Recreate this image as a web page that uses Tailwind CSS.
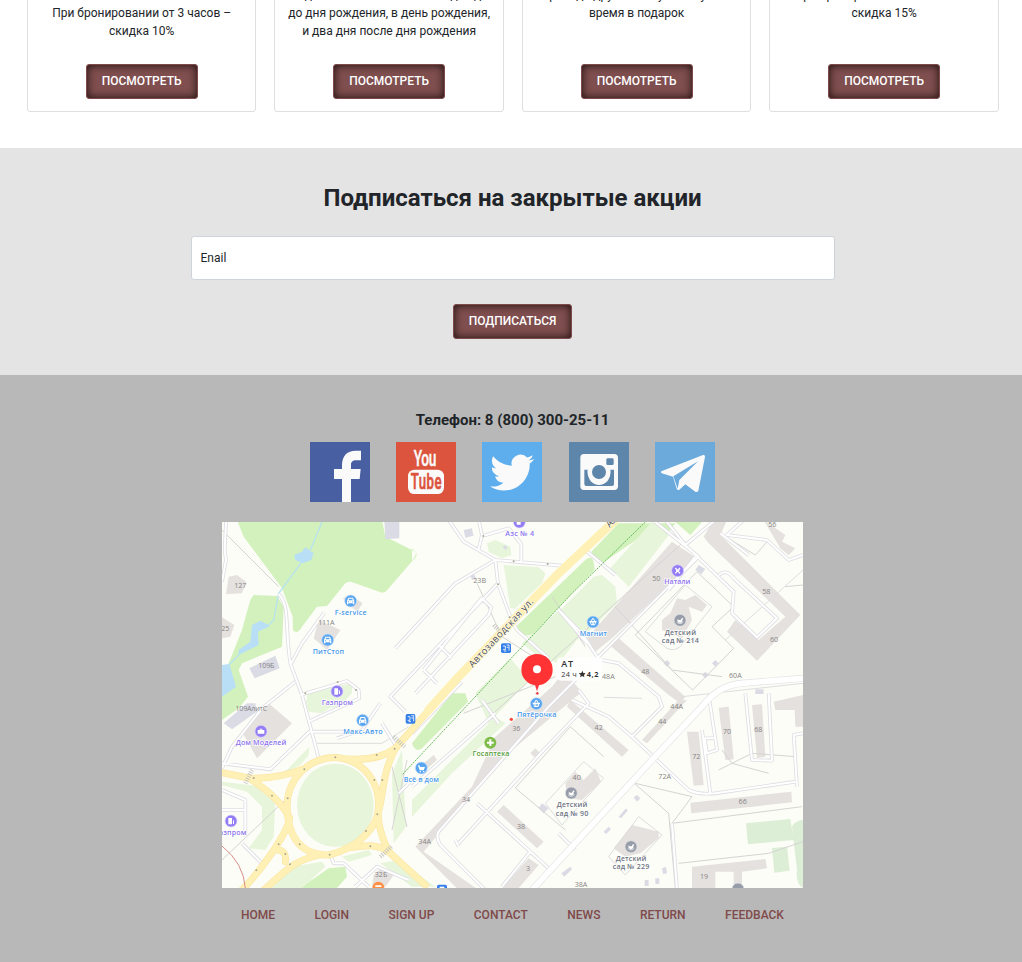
<!DOCTYPE html>
<html lang="ru">
<head>
<meta charset="utf-8">
<title>Акции</title>
<script src="https://cdn.jsdelivr.net/npm/@tailwindcss/browser@4"></script>
</head>
<body class="h-[962px] overflow-hidden bg-white font-[Roboto,sans-serif] text-xs leading-[18px] text-[#212529]">
<!-- Offer cards -->
<section class="h-[148px] overflow-hidden pl-[26.9px] pr-[23.1px]">
  <div class="-mt-[15px] grid h-[127px] grid-cols-4 gap-[18px] text-center">
    <article class="flex flex-col items-center justify-between rounded-[3px] border border-[#dfdfdf] pb-3">
      <p class="pt-[18px]">При бронировании от 3 часов –<br>скидка 10%</p>
      <button class="h-[35px] w-28 rounded-[3px] border border-[#7f4a4a] bg-[#7f4e4e] pb-0.5 font-medium text-white shadow-[inset_0_0_9px_#1a0c0c]">ПОСМОТРЕТЬ</button>
    </article>
    <article class="flex flex-col items-center justify-between rounded-[3px] border border-[#dfdfdf] pb-3">
      <p class="whitespace-nowrap">Скидка 10% именинникам за два дня<br>до дня рождения, в день рождения,<br>и два дня после дня рождения</p>
      <button class="h-[35px] w-28 rounded-[3px] border border-[#7f4a4a] bg-[#7f4e4e] pb-0.5 font-medium text-white shadow-[inset_0_0_9px_#1a0c0c]">ПОСМОТРЕТЬ</button>
    </article>
    <article class="flex flex-col items-center justify-between rounded-[3px] border border-[#dfdfdf] pb-3">
      <p>Приведи друга и получи бонусное<br>время в подарок</p>
      <button class="h-[35px] w-28 rounded-[3px] border border-[#7f4a4a] bg-[#7f4e4e] pb-0.5 font-medium text-white shadow-[inset_0_0_9px_#1a0c0c]">ПОСМОТРЕТЬ</button>
    </article>
    <article class="flex flex-col items-center justify-between rounded-[3px] border border-[#dfdfdf] pb-3">
      <p>При бронировании от 5 часов –<br>скидка 15%</p>
      <button class="h-[35px] w-28 rounded-[3px] border border-[#7f4a4a] bg-[#7f4e4e] pb-0.5 font-medium text-white shadow-[inset_0_0_9px_#1a0c0c]">ПОСМОТРЕТЬ</button>
    </article>
  </div>
</section>

<!-- Subscription -->
<section class="flex h-[227px] flex-col items-center bg-[#e4e4e4] pl-[3px] pt-[34px]">
  <h2 class="h-[54px] text-2xl leading-8 font-bold">Подписаться на закрытые акции</h2>
  <div class="flex h-11 w-[644px] items-center rounded-[3px] border border-[#ced4da] bg-white px-[9px]">Enail</div>
  <button class="mt-6 h-[35px] w-[119px] rounded-[3px] border border-[#7f4a4a] bg-[#7f4e4e] pb-0.5 font-medium text-white shadow-[inset_0_0_9px_#1a0c0c]">ПОДПИСАТЬСЯ</button>
</section>

<footer class="flex h-[587px] flex-col items-center bg-[#b8b8b8] pl-[3px] pt-[34px]">
  <p class="text-[15px] leading-[22px] font-bold">Телефон: 8 (800) 300-25-11</p>
  <div class="mt-[11px] -ml-[0.2px] flex w-[405px] justify-between">
    <svg class="size-[60px]" viewBox="0 0 180 180"><path fill="#485fa2" d="M0 0h180v180H0z"/><path fill="#fafafa" d="M96 180v-69H72V81h24V70c0-30 17-44 40-44h17v29h-14c-12 0-16 5-16 15v11h29l-3 30h-26v69z"/></svg>
    <svg class="size-[60px]" viewBox="0 0 180 180"><path fill="#dc543d" d="M0 0h180v180H0z"/><g font-family="Roboto" font-weight="500" fill="#fafafa"><text transform="translate(53 73) scale(.62 1)" font-size="66" textLength="110" stroke="#fafafa" stroke-width="1.5">You</text><rect x="36" y="83" width="108" height="73" rx="19"/><text fill="#dc543d" stroke="#dc543d" stroke-width="2" transform="translate(44 142) scale(.6 1)" font-size="66" textLength="154">Tube</text></g></svg>
    <svg class="size-[60px]" viewBox="0 0 24 24"><path fill="#5eaeed" d="M0 0h24v24H0z"/><path fill="#fafafa" transform="translate(3.25 3.4) scale(.735)" d="M23.95 4.57a10 10 0 0 1-2.82.78 4.96 4.96 0 0 0 2.16-2.72c-.95.55-2 .95-3.13 1.18a4.92 4.92 0 0 0-8.38 4.48C7.69 8.1 4.07 6.13 1.64 3.16a4.82 4.82 0 0 0-.67 2.48c0 1.71.87 3.21 2.19 4.1a4.9 4.9 0 0 1-2.23-.62v.06a4.92 4.92 0 0 0 3.95 4.83 5 5 0 0 1-2.21.08 4.94 4.94 0 0 0 4.6 3.42A9.87 9.87 0 0 1 0 19.54a13.99 13.99 0 0 0 7.55 2.21c9.05 0 14-7.5 14-13.98 0-.21 0-.42-.02-.63a9.94 9.94 0 0 0 2.46-2.55z"/></svg>
    <svg class="size-[60px]" viewBox="0 0 180 180"><path fill="#5e86aa" d="M0 0h180v180H0z"/><rect x="34" y="36" width="113" height="108" rx="11" fill="#fafafa"/><path fill="#5e86aa" d="M46 83h12c-9 61 73 61 65 0h12v43q0 6-6 6H52q-6 0-6-6z"/><circle cx="90" cy="90" r="28" fill="none" stroke="#fafafa" stroke-width="13"/><circle cx="90" cy="90" r="21" fill="#5e86aa"/><rect x="112" y="49" width="22" height="20" rx="4" fill="#5e86aa"/></svg>
    <svg class="size-[60px]" viewBox="0 0 180 180"><path fill="#6baada" d="M0 0h180v180H0z"/><path fill="#fafafa" d="M19 88 144 39q7-1 6 6l-20 101q-3 6-9 3l-30-22-18 16q-5 3-8-3L54 104 20 94q-4-3-1-6z"/><path fill="#6baada" d="M55 103 129 58 73 114l-5 26z"/></svg>
  </div>

  <!-- Map: three units per pixel -->
  <svg class="mt-5 h-[366px] w-[581px] shrink-0" viewBox="0 6 1743 1098" font-family="'Open Sans',sans-serif">
    <defs>
      <path id="streets" d="M12 6 8 90 12 120 0 185M170 222C205 260 188 320 205 430L240 525 290 715M208 430 240 370 307 278M220 485 120 565 30 680 0 745M235 525 375 483 410 510 412 535 260 605M0 730 145 748 262 635H400M475 550 420 630 345 655M520 385 700 190 820 120M770 0 780 45 770 88M680 0 725 65 820 120 900 127 1020 137M782 48 860 25 898 72 898 127M820 120 828 190 505 530 550 575M605 450 778 235 808 262 800 285 580 520M605 450 645 490M650 375 690 415M828 190 865 290 885 330 980 415M1090 90 1180 165M1010 270 1095 370M1300 6 1430 110 1190 350 980 560 650 935Q640 950 655 975L790 1110M1330 0 1390 75 1535 215 1530 280 1605 352 1665 295 1535 175Q1515 145 1490 165M1390 75 1480 0M1495 40 1580 105M1515 45 1565 0M1515 45 1635 60 1700 120 1743 105M1420 110 1340 210M1140 420 1190 430 1310 530 1320 560 1230 650 1160 590 1050 540M1230 650 1400 810Q1430 825 1480 820L1720 785M1070 510 1100 550 965 690 710 970M765 850 980 1045M925 995 840 1100M710 980 700 960M1460 525 1485 690 1455 700 1448 655 1480 655M1440 630 1465 820M1570 520 1590 720 1650 722 1640 520M1743 640 1715 645 1725 800M1350 910 1365 1110M570 640 720 485M570 800 820 580M570 780 530 820M480 610 530 690M0 810 70 840V950M0 870H70M60 970 120 1030M325 1005 335 1030H365L440 1100M400 1100 465 1040 560 1080M1010 940 1060 990M780 540 830 610M1135 425 1080 340 1010 270"/>
    </defs>
    <path fill="#fcfdf6" d="M0 0h1743v1110H0z"/>
    <g fill="#d2f1bc">
      <path d="M45 0 65 50 180 205 212 290 213 330Q225 345 240 320L285 260 315 258 370 190Q380 182 395 188L480 218Q492 218 500 205L582 110Q588 98 570 90L490 50 480 0zM95 225 165 228 185 260 180 380 60 430 50 450 78 530 50 565 0 600V480L60 330 85 240zM882 320 1090 120Q1108 105 1115 125L1118 150 940 335Q925 350 905 345zM1108 95 1190 10H1360L1330 50 1300 20 1140 130Q1120 125 1108 95zM570 85 584 100 570 122zM570 670 690 520 730 520 738 545 600 685Q580 700 570 670zM235 1104 320 1045 370 1040 375 1070 345 1104z"/>
      <path d="M1360 6H1440L1405 45z"/>
    </g>
    <g fill="#e7f5db">
      <path d="M845 135 950 142 970 160 960 190 880 265 865 265zM795 70 820 60 865 80 868 105 840 115 800 95zM1015 270 1115 170 1140 165 1180 200 1185 250 1090 345zM900 370 1005 275 1080 340 1010 430 950 410zM760 520 865 415 920 480 800 610zM1165 145 1290 5 1345 40 1220 200zM570 840 820 590 850 610 690 760 570 890zM255 515 390 490 390 520 350 560 280 570 255 560zM180 765 262 680 260 705 235 735zM0 785 100 797 160 850 155 950 130 990 80 985 120 930 120 860 75 815 0 795zM510 760 540 690 552 920 515 970zM150 1104 210 1040 300 1025 310 1040 240 1104zM360 1010 440 990 450 1005 380 1025zM475 1030 530 1020 640 1100 570 1100zM250 540H360L300 580 260 575z"/>
      <ellipse cx="340" cy="856" rx="115" ry="125"/>
    </g>
    <g fill="#dceed5"><path d="M1572 910 1705 897 1715 960 1578 973zM1650 984 1695 980 1703 1052 1657 1058zM1710 920Q1720 900 1743 900V1104Q1720 1090 1725 1050z"/></g>
    <g fill="#b8dff6"><path d="M217 105 240 95 250 82 275 100 268 120 242 130 220 120zM90 315 115 302 145 318 108 335 110 375 50 405 50 390 85 365zM0 435 22 432 42 500 0 530z"/></g>
    <path d="M300 6 265 90M240 125 170 220 155 300 140 315M55 400 15 440" fill="none" stroke="#b8e3ee" stroke-width="4"/>
    <g fill="#e5e1de">
      <path d="M20 170 45 165 72 185 60 220 12 223zM0 292 37 315 25 350 0 355zM362 235 385 225 422 250 405 275zM290 300 355 330 315 390 275 355zM60 635 138 548 210 610 105 715z"/>
      <path d="M1350 65 1425 115 1175 350 1120 395 1085 365zM1162 375 1185 350 1390 530 1375 550 1340 525zM990 500 1025 455 1080 515 870 690 805 755 605 995 770 1110H710L580 980 750 800 820 650zM1445 50 1475 0 1515 0 1495 45 1735 285 1605 422 1515 335 1540 300 1610 360 1690 290 1460 70zM1625 0 1690 45 1680 65 1720 85 1700 105 1675 85z"/>
      <path d="M1320 300 1345 280 1365 235 1390 240 1420 225 1455 255 1440 275 1400 260 1410 300 1380 355 1320 330z"/>
      <path d="M845 855 965 965 945 985 825 875zM920 1015 950 1035 885 1110H835zM1045 540 1220 690 1200 710 1035 560zM1260 660 1370 540 1395 540 1275 670zM1395 635H1430L1445 795 1415 797zM1490 563 1520 560 1535 718 1510 720zM1590 555 1620 553 1630 710 1605 714zM1405 848 1708 815 1710 847 1408 880zM1655 545 1743 525V620H1720L1718 570 1660 570zM1410 1040 1630 1017 1635 1045 1560 1055V1104H1535V1055H1480V1104H1410zM1030 790 1060 755 1085 780 1120 745 1137 785 1080 840 1035 835zM1175 985 1230 915 1310 935 1310 955 1255 1000 1210 1010zM925 700 940 685 953 698 940 713zM605 730 635 705 645 720 600 760zM455 1065 480 1040 515 1065 490 1100H450z"/>
    </g>
    <g fill="#dbdbe6"><path d="M487 0H532V55L490 58zM82 445 160 407 173 445 98 475zM5 610 75 550 100 550 105 575 30 628zM725 30 750 25 754 47 730 53zM745 165 755 160 763 178 750 180zM1420 150 1430 135 1450 147 1438 163zM1325 430 1335 420 1345 430 1335 440zM1440 465 1450 455 1460 465 1450 475zM1470 430 1480 420 1490 430 1480 440zM950 865 960 850 980 865 965 880zM1190 890 1212 865 1217 872 1197 895zM1235 832 1245 825 1255 835 1245 845zM1145 935 1160 920 1167 928 1152 942zM1018 1060 1045 1040 1050 1048 1027 1070zM1320 1045 1332 1040 1335 1060 1323 1062zM1268 1080H1280V1098H1268zM1300 1075H1312V1092H1300zM1600 508H1625V522H1600zM842 80 850 75 857 83 850 90z"/></g>
    <g fill="none" stroke="#d5d4d4" stroke-width="3">
      <path d="M0 30 170 200M1240 345 1425 155 1535 260 1470 320 1535 385 1412 510zM880 804 1045 620 1145 710M880 804 1030 930M1065 975 1237 790 1340 880 1360 1104M725 660 1380 70M1180 260 1350 450 1500 470M1495 40 1600 105 1640 60M1690 200 1743 195M1500 690 1530 730 1640 760M1490 750 1590 700 1720 710M1240 790 1410 830 1350 910 1740 860M1370 1030 1640 1000 1743 965M510 740 555 920M555 720 510 930M0 1020 200 830M725 580 1000 470M765 190 840 350 980 440M990 230 1090 380"/>
    </g>
    <g fill="none" stroke="#dedddf" stroke-width="3"><path d="M1270 335 1390 195 1470 260 1375 380Q1355 395 1335 385zM970 850 1085 725 1145 775 1020 915zM1160 1010 1250 890 1320 945 1210 1065zM285 670H480L560 620M1145 532 1260 535M1380 530 1743 490M1510 360 1743 150"/></g>
    <g fill="none" stroke-linejoin="round">
      <use href="#streets" stroke="#dedde3" stroke-width="11"/>
      <use href="#streets" stroke="#fff" stroke-width="6"/>
      <path d="M930 1110 1290 720 1440 560Q1490 495 1560 490L1743 475" stroke="#e4e2e5" stroke-width="21"/>
      <path d="M930 1110 1290 720 1440 560Q1490 495 1560 490L1743 475" stroke="#fff" stroke-width="17"/>
    </g>
    <g fill="none" stroke-linecap="round" stroke-linejoin="round">
      <g stroke="#fbe6a5" stroke-width="21">
        <path id="yellow" d="M1190-10 1010 160 710 470 520 685C480 715 420 725 340 712 250 715 195 785 195 860 198 945 230 1005 320 1005 405 985 468 925 470 860 472 790 430 720 340 712M520 685C480 760 485 825 468 880 470 930 490 980 505 1000L610 1095M370 985C430 975 470 970 505 1000M0 758 80 774C140 778 200 765 250 745M80 774C130 805 180 845 203 895 195 940 120 1050 55 1115M300 1003C210 1020 185 1060 120 1115M165 990Q195 990 190 1025"/>
      </g>
      <use href="#yellow" stroke="#fff1b5" stroke-width="17"/>
      <path d="M1175 5 1010 160 710 470 620 570" stroke="#fff1b5" stroke-width="26"/>
    </g>
    <path d="M1270 6 1050 220 540 765" fill="none" stroke="#65bb58" stroke-width="3" stroke-dasharray="6 3"/>
    <path d="M0 978Q65 1030 70 1104" fill="none" stroke="#d98d8d" stroke-width="3"/>
    <g fill="none" stroke="#c5c5c2" stroke-width="13" stroke-dasharray="3 4"><path d="M70 790 90 750M515 650 548 680M475 1010 510 978M815 315 835 335"/></g>
    <g fill="#a9a58e"><circle cx="95" cy="774" r="3"/><circle cx="150" cy="827" r="3"/><circle cx="197" cy="835" r="3"/><circle cx="247" cy="748" r="3"/><circle cx="340" cy="712" r="3"/><circle cx="464" cy="705" r="3"/><circle cx="518" cy="686" r="3"/><circle cx="481" cy="780" r="3"/><circle cx="457" cy="780" r="3"/><circle cx="466" cy="883" r="3"/><circle cx="432" cy="933" r="3"/><circle cx="445" cy="979" r="3"/><circle cx="323" cy="1004" r="3"/><circle cx="233" cy="973" r="3"/><circle cx="170" cy="973" r="3"/><circle cx="190" cy="1002" r="3"/><circle cx="204" cy="1033" r="3"/><circle cx="103" cy="1051" r="3"/><circle cx="250" cy="520" r="3"/><circle cx="347" cy="486" r="3"/><circle cx="402" cy="510" r="3"/><circle cx="784" cy="48" r="3"/><circle cx="875" cy="124" r="3"/><circle cx="977" cy="132" r="3"/><circle cx="828" cy="193" r="3"/><circle cx="863" cy="292" r="3"/></g>

    <!-- House numbers -->
    <g fill="#858484" font-size="21.5" text-anchor="middle">
      <text x="55" y="204">127</text><text x="10" y="333">25</text><text x="313" y="315" textLength="49">111А</text><text x="133" y="443" textLength="49">109Б</text><text x="88" y="573" textLength="95">109АлитС</text><text x="773" y="189">23В</text><text x="1303" y="184">50</text><text x="1651" y="22">56</text><text x="1633" y="223">58</text><text x="1656" y="366">60</text><text x="1270" y="461">48</text><text x="1159" y="477">48А</text><text x="1540" y="473">60А</text><text x="1364" y="568">44А</text><text x="1321" y="613">44</text><text x="1130" y="630">42</text><text x="883" y="633">36</text><text x="1515" y="643">70</text><text x="1609" y="637">68</text><text x="1423" y="718">72</text><text x="1328" y="777">72А</text><text x="1562" y="852">66</text><text x="1064" y="780">40</text><text x="732" y="846">34</text><text x="897" y="927">38</text><text x="608" y="972">34А</text><text x="918" y="1052">3</text><text x="1446" y="1077">19</text><text x="477" y="1071">32Б</text><text x="1077" y="1102">38А</text>
    </g>

    <!-- Place markers -->
    <g fill="#59a5ef" stroke="#c5e0fb" stroke-width="2"><circle cx="386" cy="243" r="18"/><circle cx="317" cy="360" r="18"/><circle cx="422" cy="601" r="18"/><circle cx="598" cy="744" r="18"/><circle cx="1113" cy="306" r="18"/><circle cx="943" cy="551" r="18"/></g>
    <g fill="#937cf4" stroke="#ddd5ff" stroke-width="2"><circle cx="345" cy="514" r="18"/><circle cx="117" cy="634" r="18"/><circle cx="27" cy="903" r="18"/><circle cx="892" cy="6" r="18"/><circle cx="1367" cy="152" r="18"/></g>
    <g fill="#979da8" stroke="#e2e4e8" stroke-width="2"><circle cx="1374" cy="301" r="18"/><circle cx="1048" cy="819" r="18"/><circle cx="1227" cy="980" r="18"/><circle cx="1548" cy="1107" r="18"/></g>
    <circle cx="805" cy="668" r="18" fill="#80bd4b"/><circle cx="469" cy="1103" r="18" fill="#ff9146"/>
    <g fill="#fff">
      <path id="car" fill-rule="evenodd" d="m376 241 3-8h14l3 8 1 2v10h-4v-3h-14v3h-4v-10zm5-5-1 5h12l-1-5zM378 244v3h3v-3zM391 244v3h3v-3z"/><use href="#car" x="-69" y="117"/><use href="#car" x="36" y="358"/>
      <path id="basket" fill-rule="evenodd" d="M1102 303h4l5-8h4l5 8h4v4h-2l-3 9h-12l-3-9h-2zm7 0h8l-4-6zM1108 307v6h2v-6zM1112 307v6h2v-6zM1116 307v6h2v-6z"/><use href="#basket" x="-170" y="245"/>
      <path d="M337 505h11v19h-11zM350 509l4 4v9h-3zM107 630h20v11h-20zM113 626h8v3h-8zM19 894h11v19H19zM33 899l3 4v9h-3zM884 0h12v14h-12zM588 736h4l3 5h14l-4 10h-12zM593 753h4v4h-4zM603 753h4v4h-4zM802 658h6v7h7v6h-7v7h-6v-7h-7v-6h7zM460 1096h18v5h-18z"/>
      <path id="horse" d="M1366 297l4 3h6l4-7 4 3-3 3v6q-7 7-14 0z"/><use href="#horse" x="-326" y="518"/><use href="#horse" x="-147" y="679"/>
    </g>
    <path d="M1360 144 1374 160M1374 144 1360 160M1362 151H1372" stroke="#fff" stroke-width="4"/>
    <path d="M1364 306Q1374 316 1384 306M1038 824Q1048 834 1058 824M1217 985Q1227 995 1237 985" fill="none" stroke="#fff" stroke-width="2"/>
    <g fill="#347fe9"><rect x="837" y="370" width="30" height="29" rx="5"/><rect x="551" y="582" width="29" height="29" rx="5"/><rect x="645" y="1094" width="30" height="28" rx="5"/></g>
    <path id="stop" d="M843 378H850V389H843M854 375H861V392M854 382H859M846 393H853" fill="none" stroke="#fff" stroke-width="2.5"/><use href="#stop" x="-286" y="212"/><path d="M653 1100h14v8h-14z" fill="#fff"/>

    <!-- Place names -->
    <g font-size="21.5" font-weight="600" text-anchor="middle" stroke="#fff" stroke-width="4" paint-order="stroke" stroke-linejoin="round">
      <g fill="#4799ea"><text x="386" y="285" textLength="96">F-service</text><text x="319" y="402" textLength="94">ПитСтоп</text><text x="423" y="642" textLength="118">Макс-Авто</text><text x="598" y="785" textLength="106">Всё в дом</text><text x="1114" y="347" textLength="82">Магнит</text><text x="944" y="591" textLength="118">Пятёрочка</text></g>
      <g fill="#8c72ed"><text x="346" y="555" textLength="94">Газпром</text><text x="117" y="675" textLength="152">Дом Моделей</text><text x="26" y="944" textLength="94">Газпром</text><text x="893" y="47" textLength="87">Азс № 4</text><text x="1366" y="192" textLength="78">Натали</text></g>
      <text x="807" y="709" textLength="111" fill="#559b35">Госаптека</text>
      <g fill="#6d737f"><text x="1375" y="344" textLength="94">Детский</text><text x="1375" y="370" textLength="111">сад № 214</text><text x="1050" y="862" textLength="92">Детский</text><text x="1050" y="888" textLength="98">сад № 90</text><text x="1227" y="1022" textLength="92">Детский</text><text x="1227" y="1048" textLength="110">сад № 229</text></g>
    </g>
    <g fill="#53514b" font-size="29" stroke="#fff" stroke-width="3" paint-order="stroke"><text transform="translate(752 444) rotate(-47)" textLength="270">Автозаводская ул.</text><text transform="translate(1163 24) rotate(-47)">Автозаводская</text></g>

    <!-- Selected place -->
    <rect x="1006" y="412" width="134" height="70" rx="12" fill="#fff" fill-opacity=".9"/>
    <g fill="#333" font-size="22"><text x="1018" y="441" font-size="27" font-weight="600" textLength="35">АТ</text><text x="1018" y="470" textLength="46">24 ч</text><path d="m1081 452 3 7 7 1-5 5 1 7-6-4-7 4 2-7-6-5 8-1z"/><text x="1094" y="470" font-weight="700" textLength="35">4,2</text></g>
    <path d="M938 492h14l-7 22z" fill="#ff3340"/><circle cx="945" cy="449" r="47" fill="#ff3333"/><circle cx="945" cy="448" r="12" fill="#fff"/><circle cx="946" cy="520" r="5" fill="#e83a3a" stroke="#fff" stroke-width="2"/><circle cx="868" cy="598" r="5" fill="#ff493f"/>
  </svg>

  <nav class="mt-[18px] flex w-[543px] justify-between whitespace-nowrap font-medium text-[#7f4a4a]">
    <a>HOME</a><a>LOGIN</a><a>SIGN UP</a><a>CONTACT</a><a>NEWS</a><a>RETURN</a><a>FEEDBACK</a>
  </nav>
</footer>
</body>
</html>
